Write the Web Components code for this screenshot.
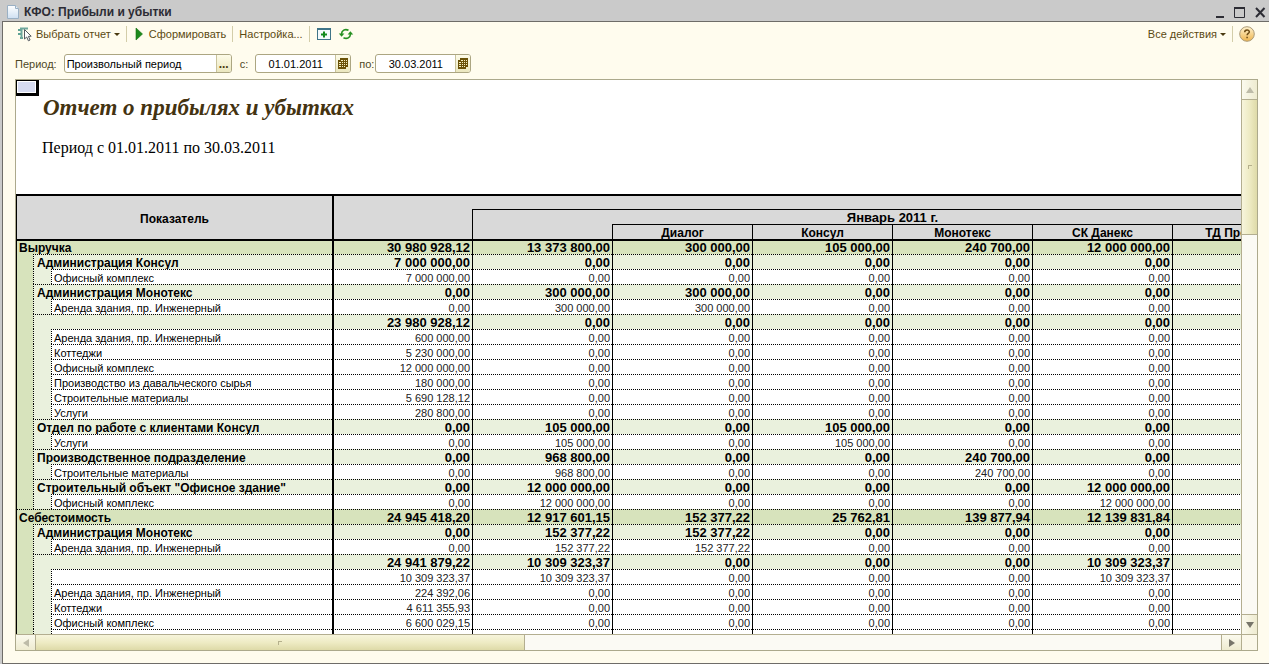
<!DOCTYPE html>
<html lang="ru">
<head>
<meta charset="utf-8">
<title>КФО: Прибыли и убытки</title>
<style>
  html, body { margin: 0; height: 100%; }
  body { font-family: "Liberation Sans", Arial, sans-serif; font-size: 11px; overflow: hidden; background: #cacaca; }
</style>
</head>
<body>
<app-window heading="КФО: Прибыли и убытки">
  <command-bar></command-bar>
  <period-bar></period-bar>
  <report-view>
    <report-sheet heading="Отчет о прибылях и убытках" period="Период с 01.01.2011 по 30.03.2011">
      <profit-table></profit-table>
    </report-sheet>
  </report-view>
</app-window>

<script>
const define = (name, html, setup) => {
  const template = document.createElement("template");
  template.innerHTML = html;
  customElements.define(name, class extends HTMLElement {
    constructor() {
      super();
      this.attachShadow({ mode: "open" }).append(template.content.cloneNode(true));
    }
    connectedCallback() {
      if (setup && !this.ready) { this.ready = true; setup(this.shadowRoot, this); }
    }
  });
};

define("app-window", `
  <style>
    :host { display: flex; flex-direction: column; height: 100vh; box-sizing: border-box; padding: 0 0 0 2px; background: #cacaca; }
    header { display: flex; align-items: center; height: 21px; flex: none; padding: 2px 0 0 4px; box-sizing: border-box; }
    h1 { flex: 1; margin: 0 0 0 4px; font-size: 12px; line-height: 18px; color: #2c2c34; }
    header button { border: 0; padding: 0; background: none; width: 20px; height: 18px; display: block; }
    svg { display: block; }
    main { flex: 1; min-height: 0; display: flex; flex-direction: column; box-sizing: border-box;
      border: 1px solid #6e6c68; border-right: 0; background: #fffcee; padding: 0 11px 12px 12px; }
  </style>
  <header>
    <svg width="14" height="16" viewBox="0 0 14 16"><defs><linearGradient id="p" x2="0" y2="1"><stop stop-color="#fff"/><stop offset="1" stop-color="#cfe0f2"/></linearGradient></defs>
      <path d="M1.500 1.500h8l3 3v10h-11z" fill="url(#p)" stroke="#9ab0c4"/><path d="M9.500 1.500v3h3" fill="#e8f0f8" stroke="#9ab0c4"/></svg>
    <h1></h1>
    <button aria-label="Свернуть"><svg width="20" height="18"><path d="M7 13h8v2H7z" fill="#2c2c34"/></svg></button>
    <button aria-label="Развернуть"><svg width="20" height="18"><path d="M5.500 5v9.500h10V5" fill="none" stroke="#2c2c34"/><path d="M5 4h11v2H5z" fill="#2c2c34"/></svg></button>
    <button aria-label="Закрыть"><svg width="20" height="18"><path d="M7 5l8.500 9M15.500 5L7 14" stroke="#2c2c34" stroke-width="2" fill="none"/></svg></button>
  </header>
  <main><slot></slot></main>
`, (root, host) => { root.querySelector("h1").textContent = host.getAttribute("heading"); });

define("tool-button", `
  <style>
    :host { display: block; }
    button { display: flex; align-items: center; gap: 4px; height: 20px; margin: 0; padding: 0; border: 0; background: none;
      font: inherit; line-height: 20px; color: #5b4a12; white-space: nowrap; }
    i { width: 0; border: 3px solid transparent; border-top: 3px solid #4a3a10; border-bottom: 0; margin-left: -1px; display: none; }
    :host([menu]) i { display: block; }
  </style>
  <button><slot name="icon"></slot><slot></slot><i></i></button>
`, (root, host) => { const l = host.getAttribute("label"); if (l) root.querySelector("button").setAttribute("aria-label", l); });

define("command-bar", `
  <style>
    :host { display: flex; align-items: center; height: 24px; flex: none; padding: 0 3px 0 2px; }
    hr { width: 1px; height: 16px; margin: 0 6px; border: 0; background: #d3cda9; }
    .space { flex: 1; }
    .refresh { margin-left: 6px; }
    svg { display: block; }
  </style>
  <tool-button menu><svg slot="icon" width="15" height="16" viewBox="0 0 15 16">
    <path d="M1 4h4M1 8h4M3 12h3" stroke="#5fa294" stroke-width="2"/><path d="M3 2.500h8M4.500 2v11" stroke="#6fa79c" stroke-width="2"/>
    <path d="M7.500 3.500v9.500l2.200-2 1.700 3.800 1.700-.8-1.700-3.600 2.800-.2z" fill="#fff" stroke="#555a60"/></svg>Выбрать отчет</tool-button>
  <hr>
  <tool-button><svg slot="icon" width="12" height="14" viewBox="0 0 12 14"><path d="M3 1l6.500 6L3 13z" fill="#1d8a1d" stroke="#14700f" stroke-width=".6"/></svg>Сформировать</tool-button>
  <hr>
  <tool-button>Настройка...</tool-button>
  <hr>
  <tool-button label="Развернуть группы"><svg slot="icon" width="16" height="14" viewBox="0 0 16 14"><rect x="1.500" y="1.500" width="13" height="11" fill="#f4fafc" stroke="#3f7488"/><path d="M1 1h14v2H1z" fill="#3f7488"/><path d="M8 4.500v6M5 7.500h6" stroke="#128a1c" stroke-width="2"/></svg></tool-button>
  <tool-button class="refresh" label="Обновить"><svg slot="icon" width="16" height="14" viewBox="0 0 16 14"><path d="M3.500 7C3.700 3.500 7 1.500 10.500 3.300M12.500 7C12.300 10.500 9 12.500 5.500 10.700" fill="none" stroke="#279022" stroke-width="1.600"/><path d="M.8 6.500h5.600L3.600 9.800zM15.200 7.500H9.600l2.800-3.300z" fill="#279022"/></svg></tool-button>
  <span class="space"></span>
  <tool-button menu>Все действия</tool-button>
  <hr>
  <tool-button label="Справка"><svg slot="icon" width="16" height="16" viewBox="0 0 16 16"><defs><linearGradient id="h" x2="0" y2="1"><stop stop-color="#fff3cf"/><stop offset="1" stop-color="#eeb44d"/></linearGradient></defs><circle cx="8" cy="8" r="7.300" fill="url(#h)" stroke="#ab9a78"/><path d="M5.700 6.300c0-3.200 4.800-3 4.600-.3-.1 1.400-2.200 1.500-2.200 3.200M8.100 10.800v1.500" fill="none" stroke="#6d4b14" stroke-width="1.500"/></svg></tool-button>
`);

define("entry-field", `
  <style>
    :host { display: flex; align-items: center; }
    label { color: #4e4826; line-height: 18px; white-space: nowrap; padding-right: var(--gap, 7px); }
    div { display: flex; width: var(--width, 96px); height: 19px; box-sizing: border-box; border: 1px solid #aca682; border-radius: 3px; background: #fff; overflow: hidden; }
    input { flex: 1; min-width: 0; margin: 0; border: 0; padding: 0 2px; background: none; font: inherit; color: #000; outline: 0; text-align: var(--align, left); }
    button { width: 15px; padding: 0; border: 0; border-left: 1px solid #c9c39c; background: linear-gradient(#fdfbe8, #ebe7bf); font: bold 12px/14px "Liberation Sans", sans-serif; color: #4a3a10; display: flex; justify-content: center; align-items: center; }
  </style>
  <label for="f"></label>
  <div><input id="f" type="text"><button></button></div>
`, (root, host) => {
  root.querySelector("label").textContent = host.getAttribute("label");
  root.querySelector("input").value = host.getAttribute("value");
  const button = root.querySelector("button");
  if (host.hasAttribute("date")) {
    button.setAttribute("aria-label", "Выбрать дату");
    button.innerHTML = '<svg width="12" height="12" viewBox="0 0 12 12"><path d="M3 0h8v9H9v2H1V2h2z" fill="#6a5208"/><path d="M4 2h2v1H4zM7 2h1v1H7zM9 2h1v1H9zM2 4h2v1H2zM5 4h1v1H5zM7 4h1v1H7zM9 4h1v1H9zM2 6h2v1H2zM5 6h1v1H5zM7 6h1v1H7zM9 6h1v1H9zM2 8h2v1H2zM5 8h1v1H5zM7 8h1v1H7z" fill="#f5edc0"/></svg>';
  } else button.textContent = "...";
});

define("period-bar", `
  <style>
    :host { display: flex; align-items: center; height: 33px; box-sizing: border-box; padding-top: 2px; flex: none; gap: 8px; }
    .kind { --width: 168px; }
    .date { --align: center; }
    .to { --gap: 1px; }
  </style>
  <entry-field class="kind" label="Период:" value="Произвольный период"></entry-field>
  <entry-field class="date" date label="с:" value="01.01.2011"></entry-field>
  <entry-field class="date to" date label="по:" value="30.03.2011"></entry-field>
`);

define("scroll-strip", `
  <style>
    :host { display: flex; background: #fbfaf4; box-sizing: border-box; }
    :host([vertical]) { flex-direction: column; }
    button { flex: none; width: 19px; padding: 0; border: 0; background: linear-gradient(#fbfaee, #eeebd0); display: flex; align-items: center; justify-content: center; }
    .track { flex: 1; display: flex; border: 0 solid #b3ae90; border-width: 0 1px; }
    .thumb { flex: 7; box-sizing: border-box; border-right: 1px solid #b3ae90; background: linear-gradient(#f7f5dc, #eeebc4 50%, #dedaa8); display: flex; align-items: center; justify-content: center; }
    .thumb::after { content: ""; width: 3px; height: 3px; border: 1px solid #b5b08c; border-width: 1px 0 0 1px; }
    .rest { flex: 10; }
    :host([vertical]) button { width: auto; height: 19px; background: linear-gradient(90deg, #fbfaee, #eeebd0); }
    :host([vertical]) .track { flex-direction: column; border-width: 1px 0; }
    :host([vertical]) .thumb { flex: 6; border-right: 0; border-bottom: 1px solid #b3ae90; background: linear-gradient(90deg, #f7f5dc, #eeebc4 50%, #dedaa8); }
    :host([vertical]) .rest { flex: 17; }
    svg { display: block; }
    :host([vertical]) svg { transform: rotate(90deg); }
  </style>
  <button aria-label="Назад"><svg width="8" height="8"><path d="M7 0v8L1 4z" fill="#bdbba8"/></svg></button>
  <div class="track"><div class="thumb"></div><div class="rest"></div></div>
  <button aria-label="Вперёд"><svg width="8" height="8"><path d="M1 0v8l6-4z" fill="#77756a"/></svg></button>
`);

define("report-view", `
  <style>
    :host { flex: 1; min-height: 0; display: grid; grid-template: minmax(0, 1fr) 16px / minmax(0, 1fr) 16px; border: 1px solid #aca98c; background: #fff; }
    .sheet { overflow: hidden; }
    .v { border-left: 1px solid #b3ae90; }
    .h { border-top: 1px solid #b3ae90; }
    .corner { background: #fbf8ea; border: 0 solid #b3ae90; border-width: 1px 0 0 1px; }
  </style>
  <div class="sheet"><slot></slot></div>
  <scroll-strip class="v" vertical></scroll-strip>
  <scroll-strip class="h"></scroll-strip>
  <div class="corner"></div>
`);

define("report-sheet", `
  <style>
    :host { display: block; }
    .cursor { width: 23px; height: 16px; box-sizing: border-box; border: 1px solid #000; border-width: 1px 3px 3px 1px; background: #d6dbf1; box-shadow: inset 0 0 0 1px #fff; }
    h2, p { margin: 0 0 0 27px; font-family: "Liberation Serif", "Times New Roman", serif; }
    h2 { font-size: 23px; line-height: 24px; font-style: italic; color: #443311; }
    p { font-size: 16px; line-height: 20px; margin: 18px 0 36px 26px; color: #000; }
  </style>
  <div class="cursor"></div>
  <h2></h2>
  <p></p>
  <slot></slot>
`, (root, host) => {
  root.querySelector("h2").textContent = host.getAttribute("heading");
  root.querySelector("p").textContent = host.getAttribute("period");
});

const Z = "0,00";
const rows = [
  [0, "Выручка", "30 980 928,12", "13 373 800,00", "300 000,00", "105 000,00", "240 700,00", "12 000 000,00"],
  [1, "Администрация Консул", "7 000 000,00", Z, Z, Z, Z, Z],
  [2, "Офисный комплекс", "7 000 000,00", Z, Z, Z, Z, Z],
  [1, "Администрация Монотекс", Z, "300 000,00", "300 000,00", Z, Z, Z],
  [2, "Аренда здания, пр. Инженерный", Z, "300 000,00", "300 000,00", Z, Z, Z],
  [1, "", "23 980 928,12", Z, Z, Z, Z, Z],
  [2, "Аренда здания, пр. Инженерный", "600 000,00", Z, Z, Z, Z, Z],
  [2, "Коттеджи", "5 230 000,00", Z, Z, Z, Z, Z],
  [2, "Офисный комплекс", "12 000 000,00", Z, Z, Z, Z, Z],
  [2, "Производство из давальческого сырья", "180 000,00", Z, Z, Z, Z, Z],
  [2, "Строительные материалы", "5 690 128,12", Z, Z, Z, Z, Z],
  [2, "Услуги", "280 800,00", Z, Z, Z, Z, Z],
  [1, "Отдел по работе с клиентами Консул", Z, "105 000,00", Z, "105 000,00", Z, Z],
  [2, "Услуги", Z, "105 000,00", Z, "105 000,00", Z, Z],
  [1, "Производственное подразделение", Z, "968 800,00", Z, Z, "240 700,00", Z],
  [2, "Строительные материалы", Z, "968 800,00", Z, Z, "240 700,00", Z],
  [1, "Строительный объект \"Офисное здание\"", Z, "12 000 000,00", Z, Z, Z, "12 000 000,00"],
  [2, "Офисный комплекс", Z, "12 000 000,00", Z, Z, Z, "12 000 000,00"],
  [0, "Себестоимость", "24 945 418,20", "12 917 601,15", "152 377,22", "25 762,81", "139 877,94", "12 139 831,84"],
  [1, "Администрация Монотекс", Z, "152 377,22", "152 377,22", Z, Z, Z],
  [2, "Аренда здания, пр. Инженерный", Z, "152 377,22", "152 377,22", Z, Z, Z],
  [1, "", "24 941 879,22", "10 309 323,37", Z, Z, Z, "10 309 323,37"],
  [2, "", "10 309 323,37", "10 309 323,37", Z, Z, Z, "10 309 323,37"],
  [2, "Аренда здания, пр. Инженерный", "224 392,06", Z, Z, Z, Z, Z],
  [2, "Коттеджи", "4 611 355,93", Z, Z, Z, Z, Z],
  [2, "Офисный комплекс", "6 600 029,15", Z, Z, Z, Z, Z],
  [2, "Производство из давальческого сырья", "221 457,60", Z, Z, Z, Z, Z]
];

define("profit-table", `
  <style>
    :host { display: block; }
    table { width: 1296px; table-layout: fixed; border-collapse: separate; border-spacing: 0; border-left: 1px solid #000; color: #000; }
    col.a { width: 16px; } col.b { width: 18px; } col.c { width: 281px; } col.n { width: 140px; }
    th, td { box-sizing: border-box; height: 15px; padding: 2px 2px 0; line-height: 12px; white-space: nowrap; overflow: hidden; border: 0 solid #000; }
    thead th { background: #d9d9d9; font-size: 12px; border-top-width: 1px; border-left-width: 1px; }
    thead .top { border-top-width: 2px; }
    thead .first, thead .none { border-left-width: 0; }
    thead .none { border-top-width: 2px; padding: 0; }
    thead .under { border-top-width: 0; }
    thead .month { font-size: 13px; }
    thead .total, tbody .total { border-left-width: 2px; }
    tbody th { text-align: left; font-weight: inherit; border-top: 1px dotted #000; }
    tbody td { text-align: right; border-top: 1px dotted #000; border-left: 1px solid #000; }
    .l0, .l1 { font-weight: bold; font-size: 13px; }
    .l0 th, .l1 th { font-size: 12px; }
    .l2 { font-size: 11px; }
    .l0 th, .l0 td, td.a { background: #d7e3bc; }
    .l1 th, .l1 td.v, td.b { background: #eaf1dd; }
    tbody td.a, tbody td.b { border-top: 0; border-left: 0; }
    tbody td.b, .l1 th, .l2 th { border-left: 1px dotted #000; }
    .l1 th { padding-left: 3px; }
    .l2 td.v { color: #222; }
    tbody tr:first-child th, tbody tr:first-child td { border-top: 2px solid #000; padding-top: 1px; }
  </style>
  <table>
    <colgroup><col class="a"><col class="b"><col class="c"><col class="n"><col class="n"><col class="n"><col class="n"><col class="n"><col class="n"><col class="n"></colgroup>
    <thead>
      <tr><th class="top first" colspan="3" rowspan="3">Показатель</th><th class="top total" rowspan="3"></th><th class="none" colspan="6"></th></tr>
      <tr><th class="month" colspan="6">Январь 2011 г.</th></tr>
      <tr><th class="under"></th><th>Диалог</th><th>Консул</th><th>Монотекс</th><th>СК Данекс</th><th>ТД Прогресс</th></tr>
    </thead>
    <tbody></tbody>
  </table>
`, root => {
  const body = root.querySelector("tbody");
  for (const [level, name, ...values] of rows) {
    const tr = body.insertRow();
    tr.className = "l" + level;
    if (level > 0) tr.insertCell().className = "a";
    if (level > 1) tr.insertCell().className = "b";
    const th = document.createElement("th");
    th.scope = "row";
    th.colSpan = 3 - level;
    th.textContent = name;
    tr.append(th);
    [...values, ""].forEach((value, i) => {
      const td = tr.insertCell();
      td.className = i ? "v" : "v total";
      td.textContent = value;
    });
  }
});
</script>
</body>
</html>
